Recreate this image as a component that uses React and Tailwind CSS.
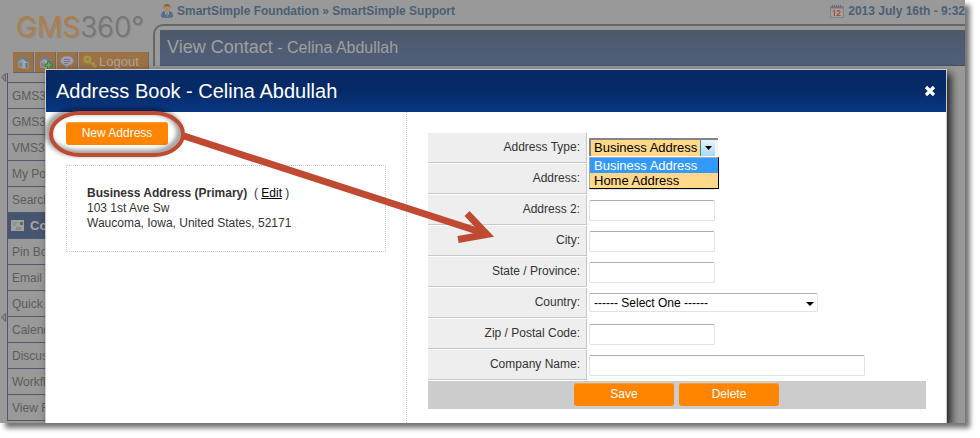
const menuItems = [
  "GMS360",
  "GMS360",
  "VMS360",
  "My Portal",
  "Search",
  "Contacts",
  "Pin Board",
  "Email",
  "Quick Links",
  "Calendar",
  "Discussions",
  "Workflows",
  "View Reports",
]

const inputClass =
  "h-[21px] rounded-[2px] border border-[#dfe3ea] border-t-[#abadb3] bg-white px-1 text-[13px] text-black outline-none"

function HouseIcon({ plus }) {
  return (
    <svg width="16" height="16" viewBox="0 0 16 16" aria-hidden="true">
      <path d="M3 8v5l5 1.500h5.500V7L10 3z" fill="#a6a6a6" />
      <path d="M3 8v5l5 1.500V8.500L5 5z" fill="#8f959b" />
      <path d="M.8 8.500 4.500 3.500l5-1.500 5.500 5.500-1 1-2.500-.5L8.500 5.500 5.500 5l-3.500 4z" fill="#667f93" />
      <path d="M4.500 9v3l2 .5v-3z" fill="#6f7f90" />
      <path d="M10.500 9h2v5h-2z" fill="#54718c" />
      {plus && (
        <path
          d="M10.500 7.500h2.500v2.500h2.500v2.500h-2.500v2.500h-2.500v-2.500H8v-2.500h2.500z"
          fill="#6fa566"
          stroke="#3b7a40"
        />
      )}
    </svg>
  )
}

function BubbleIcon() {
  return (
    <svg width="16" height="16" viewBox="0 0 16 16" aria-hidden="true">
      <path
        d="M8 2c4 0 6.500 2 6.500 4.700S12 11.300 9.500 11.500L7 14.500v-3C3.500 11 1.500 9.500 1.500 6.700S4 2 8 2z"
        fill="#a19fac"
        stroke="#85819a"
      />
      <path d="M5 5.500h6M5 7.500h6M5 9.500h4" stroke="#77738c" />
    </svg>
  )
}

function KeyIcon() {
  return (
    <svg width="14" height="14" viewBox="0 0 14 14" aria-hidden="true">
      <circle cx="4.500" cy="4.500" r="2.700" fill="none" stroke="#a2944a" strokeWidth="2.800" />
      <path d="M6 6l6.500 6M9 10l2.500-2.500M11 12.500l2.500-2.500" stroke="#a2944a" strokeWidth="1.800" />
    </svg>
  )
}

function UserIcon() {
  return (
    <svg width="12" height="14" viewBox="0 0 12 14" aria-hidden="true">
      <path d="M0 13c0-4 1-5.500 3-5.500h6c2 0 3 1.500 3 5.500-3 1.300-9 1.300-12 0z" fill="#4f6f8e" />
      <path d="M4.500 7.500h3l.5 2-2 4-2-4z" fill="#a5a5a5" />
      <path d="M5.500 8.500h1v4h-1z" fill="#8a4a44" />
      <circle cx="6" cy="4.200" r="3.200" fill="#a98d6c" />
      <path d="M2.700 4.500C2.200 1 4 0 6 0s4 1 3.300 4.500L8.500 2.500h-5z" fill="#86683c" />
    </svg>
  )
}

function CalendarIcon() {
  return (
    <svg width="14" height="13" viewBox="0 0 14 13" aria-hidden="true">
      <path d="M.5 1.500h13v11H.5z" fill="#a0a0a0" stroke="#80808a" />
      <path d="M1 2.500h12" stroke="#857575" strokeWidth="2" />
      <path d="M2.500 0v3M4.500 0v3M6.500 0v3M8.500 0v3M10.500 0v3" stroke="#6c6c6c" />
      <path d="M3 6.500l1.500-1V11M7 6.500c.5-1.200 3-1.200 3 .3S7 9.500 7 10.500h3.500" fill="none" stroke="#a35436" strokeWidth="1.200" />
    </svg>
  )
}

function CardIcon() {
  return (
    <svg width="13" height="11" viewBox="0 0 13 11" aria-hidden="true">
      <path d="M0 0h13v11H0z" fill="#a0a0a0" />
      <path d="M9 2h3v3H9z" fill="#4c7b4c" />
      <path d="M2 3h4M2 5h3" stroke="#828282" />
      <path d="M5 7h5v3H5z" fill="#8b8b8b" />
    </svg>
  )
}

function TopBar() {
  return (
    <div className="flex h-6 items-center justify-between overflow-hidden whitespace-nowrap pb-[2px] pl-2 text-[12px] font-bold text-[#4a5f76]">
      <div className="flex items-center gap-1">
        <UserIcon />
        <span>SmartSimple Foundation » SmartSimple Support</span>
      </div>
      <div className="flex items-center gap-1">
        <CalendarIcon />
        <span>2013 July 16th - 9:32</span>
      </div>
    </div>
  )
}

function Sidebar() {
  return (
    <div className="w-[153px] shrink-0">
      <div className="flex h-[52px] items-center pl-4 pt-[2px] font-['Inter'] text-[28px] font-normal text-[#ad7f4d] [text-shadow:1px_1px_1px_#858585]">
        GMS<span className="font-light text-[#757575]">360°</span>
      </div>
      <div className="ml-[13px] mr-1 flex h-[21px] gap-px border-b border-[#5d6470]">
        <button aria-label="Home" className="flex w-[21px] items-center justify-center border-r border-[#666b75] bg-[#9c7145]">
          <HouseIcon />
        </button>
        <button aria-label="Add home" className="flex w-[21px] items-center justify-center border-r border-[#666b75] bg-[#9c7145]">
          <HouseIcon plus />
        </button>
        <button aria-label="Messages" className="flex w-[21px] items-center justify-center border-r border-[#666b75] bg-[#9c7145]">
          <BubbleIcon />
        </button>
        <button className="flex flex-1 items-center gap-[2px] border-r border-[#666b75] bg-[#9c7145] pl-1 text-[13px] text-[#b0a598]">
          <KeyIcon />
          Logout
        </button>
      </div>
      <div className="flex">
        <div className="flex w-[7px] flex-col gap-[231px] pl-px">
          <svg width="5" height="9" viewBox="0 0 5 9" aria-hidden="true">
            <path d="M4.500 .5v8L.5 4z" fill="#888" stroke="#666" />
          </svg>
          <svg width="5" height="9" viewBox="0 0 5 9" aria-hidden="true">
            <path d="M4.500 .5v8L.5 4z" fill="#888" stroke="#666" />
          </svg>
        </div>
        <ul className="flex-1 border-l border-[#4b586e] pt-[9px] text-[12px] text-[#5c5c5c]">
          {menuItems.map((item, index) => (
            <li key={index} className="h-[26px] border-t border-[#4b586e] last:h-[27px] last:border-b">
              {item === "Contacts" ? (
                <a href="#contacts" className="flex h-full items-center gap-[6px] bg-[#475570] pl-[3px] text-[13px] font-bold text-[#a8a8a8]">
                  <CardIcon />
                  {item}
                </a>
              ) : (
                <a href="#menu" className="flex h-full items-center pl-1">
                  {item}
                </a>
              )}
            </li>
          ))}
        </ul>
      </div>
    </div>
  )
}

function Field({ id, label, children }) {
  return (
    <div className="flex h-[30px]">
      <label
        htmlFor={id}
        className="flex w-[159px] shrink-0 items-center justify-end border-b border-r border-[#c8c8c8] bg-[#eee] pb-[2px] pr-[6px] text-[12px] text-[#333]"
      >
        {label}
      </label>
      <div className="flex flex-1 items-start pl-[2px] pt-[5px]">{children}</div>
    </div>
  )
}

function OrangeButton({ className, children }) {
  return (
    <button
      type="button"
      className={`block h-[23px] rounded-[3px] bg-[#ff8400] pb-px text-[12px] text-white shadow-[inset_0_1px_0_#ff9d33] ${className}`}
    >
      {children}
    </button>
  )
}

function AddressForm() {
  return (
    <form className="flex flex-col gap-px">
      <Field id="type" label="Address Type:">
        <div className="relative h-[19px] w-[129px]">
          <select
            id="type"
            className="block h-[18px] w-full appearance-none border-l-2 border-t-2 border-[#858585] bg-[#ffd88a] pb-px pl-[3px] text-[13px] leading-[15px] text-black outline-none"
          >
            <option>Business Address</option>
            <option>Home Address</option>
          </select>
          <span className="pointer-events-none absolute bottom-px right-0 top-[2px] flex w-[18px] items-center justify-center border-l border-r-3 border-l-[#3c7fb1] border-r-[#f5f5f5] bg-linear-to-b from-[#e6f4fc] to-[#a9daf3]">
            <svg width="7" height="4" viewBox="0 0 7 4" aria-hidden="true">
              <path d="M0 0h7L3.500 4z" fill="#000" />
            </svg>
          </span>
          <ul
            role="listbox"
            aria-label="Address types"
            className="absolute left-0 top-[19px] z-10 w-[130px] border border-b-black border-l-[#aaa] border-r-black border-t-[#aaa] bg-[#ffd88a] text-[13px] leading-[15px] text-black"
          >
            <li role="option" aria-selected="true" className="bg-[#3399ff] pl-1 text-white">
              Business Address
            </li>
            <li role="option" aria-selected="false" className="pl-1">
              Home Address
            </li>
          </ul>
        </div>
      </Field>
      <Field id="address" label="Address:">
        <input id="address" className={`w-[126px] ${inputClass}`} />
      </Field>
      <Field id="address2" label="Address 2:">
        <input id="address2" className={`w-[126px] ${inputClass}`} />
      </Field>
      <Field id="city" label="City:">
        <input id="city" className={`w-[126px] ${inputClass}`} />
      </Field>
      <Field id="state" label="State / Province:">
        <input id="state" className={`w-[126px] ${inputClass}`} />
      </Field>
      <Field id="country" label="Country:">
        <div className="relative">
          <select
            id="country"
            className="block h-[19px] w-[229px] appearance-none rounded-[2px] border border-[#dfe3ea] border-t-[#abadb3] bg-white pl-1 text-[12px] text-black outline-none"
          >
            <option>------ Select One ------</option>
          </select>
          <svg className="pointer-events-none absolute right-1 top-[9px]" width="8" height="4" viewBox="0 0 8 4" aria-hidden="true">
            <path d="M0 0h8L4 4z" fill="#000" />
          </svg>
        </div>
      </Field>
      <Field id="zip" label="Zip / Postal Code:">
        <input id="zip" className={`w-[126px] ${inputClass}`} />
      </Field>
      <Field id="company" label="Company Name:">
        <input id="company" className={`w-[276px] ${inputClass}`} />
      </Field>
      <div className="flex h-7 justify-center gap-[5px] bg-[#ccc] pr-px pt-[2px]">
        <OrangeButton className="w-[100px]">Save</OrangeButton>
        <OrangeButton className="w-[100px]">Delete</OrangeButton>
      </div>
    </form>
  )
}

function AddressDialog() {
  return (
    <div
      role="dialog"
      aria-label="Address Book"
      className="flex h-full flex-col border-x border-t border-[#ccc] bg-white shadow-[4px_4px_8px_rgba(0,0,0,0.8)]"
    >
      <div className="flex h-[42px] items-center justify-between bg-linear-to-b from-[#062a66] from-50% to-[#0a3885] px-[10px] text-white">
        <h2 className="text-[20px]">Address Book - Celina Abdullah</h2>
        <button aria-label="Close">
          <svg width="12" height="12" viewBox="0 0 12 12" aria-hidden="true">
            <path d="M2 2l8 8M10 2l-8 8" stroke="#fff" strokeWidth="3.200" />
          </svg>
        </button>
      </div>
      <div className="flex flex-1">
        <div className="w-2/5 px-5 pt-[10px]">
          <OrangeButton className="w-[102px]">New Address</OrangeButton>
          <div className="mt-5 border border-dotted border-[#ccc] p-5 text-[12px] leading-[15px] text-[#333]">
            <p>
              <b>Business Address (Primary)</b>&nbsp; ({" "}
              <a href="#edit" className="text-black underline">
                Edit
              </a>{" "}
              )
            </p>
            <p>103 1st Ave Sw</p>
            <p>Waucoma, Iowa, United States, 52171</p>
          </div>
        </div>
        <div className="flex-1 border-l border-dotted border-[#ccc] pb-[14px] pl-[21px] pr-5 pt-[21px]">
          <AddressForm />
        </div>
      </div>
    </div>
  )
}

function Callout() {
  return (
    <svg
      className="pointer-events-none absolute left-0 top-0 z-20"
      width="510"
      height="260"
      viewBox="0 0 510 260"
      fill="none"
      stroke="#c04a31"
      aria-hidden="true"
    >
      <defs>
        <filter id="soft" x="-20%" y="-40%" width="140%" height="180%">
          <feGaussianBlur stdDeviation="2.500" />
        </filter>
      </defs>
      <rect x="48" y="111" width="132" height="42" rx="29" ry="21" stroke="#000" strokeOpacity="0.500" strokeWidth="5" filter="url(#soft)" />
      <rect x="51" y="113" width="132" height="42" rx="29" ry="21" strokeWidth="4" />
      <path d="M184 136L485 233.500" strokeWidth="7" />
      <path d="M467 213.500L487 234.500L458 239.500" strokeWidth="7" />
    </svg>
  )
}

export default function App() {
  return (
    <div className="bg-white pb-[15px] pr-[15px] font-['Liberation_Sans',Arial,sans-serif]">
      <div className="relative grid overflow-hidden bg-[#999] shadow-[5px_5px_5px_rgba(0,0,0,0.55)]">
        <div className="col-start-1 row-start-1 flex min-w-0">
          <Sidebar />
          <div className="min-w-0 flex-1">
            <TopBar />
            <div className="rounded-tl-[10px] border-l-2 border-t-2 border-[#666] pl-[5px] pt-1">
              <div className="flex h-9 items-center border-b border-[#455066] bg-linear-to-b from-[#4d586c] to-[#505f78] pl-[7px] text-[18px] text-[#a0a0a0]">
                View Contact
                <span className="whitespace-pre text-[16px]"> - Celina Abdullah</span>
              </div>
            </div>
          </div>
        </div>
        <div className="z-10 col-start-1 row-start-1 pl-[45px] pr-[18px] pt-[69px]">
          <AddressDialog />
        </div>
        <Callout />
      </div>
    </div>
  )
}
